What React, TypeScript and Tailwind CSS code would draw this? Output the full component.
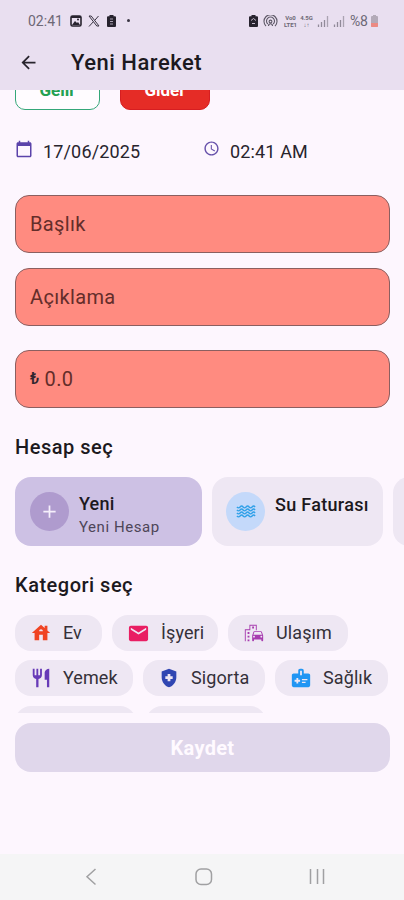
import type { ReactNode } from "react";
import {
  MdHouse,
  MdMail,
  MdEmojiTransportation,
  MdRestaurant,
  MdHealthAndSafety,
  MdMedicalInformation,
  MdCalendarToday,
  MdAccessTime,
  MdArrowBack,
  MdAdd,
} from "react-icons/md";

function StatusBar() {
  return (
    <div className="flex h-[41px] items-center pl-[28px] pr-[26px] text-[#6d6876]">
      <span className="w-[36px] whitespace-nowrap text-[14px] leading-none">02:41</span>
      <svg className="ml-[6px]" width="12" height="12" viewBox="0 0 12 12">
        <rect x="1" y="1" width="10" height="10" rx="1.5" fill="none" stroke="#27232e" strokeWidth="1.6" />
        <path d="M1 3h10V1H1zM2 10l3-4 2 2 1-1 2 3z" fill="#27232e" />
        <circle cx="8" cy="4.5" r="1" fill="#27232e" />
      </svg>
      <svg className="ml-[6px]" width="12" height="12" viewBox="0 0 12 12" fill="none" stroke="#3a3543">
        <path d="M1 1h2.2L11 11H8.800z" />
        <path d="M10.500 1 6.800 5.300M5.200 6.900 1 11.500" />
      </svg>
      <svg className="ml-[7px]" width="9" height="12" viewBox="0 0 9 12">
        <path d="M2.500 0h4v1.300H8a1 1 0 0 1 1 1V11a1 1 0 0 1-1 1H1a1 1 0 0 1-1-1V2.300a1 1 0 0 1 1-1h1.500z" fill="#27232e" />
        <path d="M3 4h3M3 6.500h3M3 9h3" stroke="#aaa2b2" />
      </svg>
      <span className="ml-[11px] size-[3px] rounded-full bg-[#3a3543]" />
      <svg className="ml-auto" width="9" height="12" viewBox="0 0 9 12">
        <path d="M2.500 0h4v1.300H8a1 1 0 0 1 1 1V11a1 1 0 0 1-1 1H1a1 1 0 0 1-1-1V2.300a1 1 0 0 1 1-1h1.500z" fill="#27232e" />
        <path d="M2 5.500 4.500 3.500 7 5.500M3 8.500h3" fill="none" stroke="#c5bccd" />
      </svg>
      <svg className="ml-[5px]" width="15" height="12" viewBox="0 0 15 12" fill="none" stroke="#5d5866" strokeWidth="1.100">
        <path d="M3 11a6.500 6.500 0 1 1 9 0M4.800 9a4 4 0 1 1 5.400 0" />
        <circle cx="7.500" cy="6.500" r="1.400" />
        <path d="M5.500 11c0-3 4-3 4 0" />
      </svg>
      <div className="ml-[5px] flex w-[15px] flex-col text-center text-[6px] font-bold leading-[7px]">
        <span>Vo0</span>
        <span className="whitespace-nowrap">LTE1</span>
      </div>
      <div className="ml-[2px] flex w-[13px] flex-col text-center text-[6px] font-bold leading-[7px]">
        <span>4.5G</span>
        <span>↓↑</span>
      </div>
      <Signal />
      <Signal />
      <span className="ml-[5px] w-[19px] whitespace-nowrap text-[14px] leading-none tracking-[-0.3px]">%8</span>
      <svg className="ml-[2px]" width="7" height="12" viewBox="0 0 7 12">
        <path d="M2 0h3v1h1a1 1 0 0 1 1 1v9a1 1 0 0 1-1 1H1a1 1 0 0 1-1-1V2a1 1 0 0 1 1-1h1z" fill="#b3aab8" />
        <path d="M0 8h7v3a1 1 0 0 1-1 1H1a1 1 0 0 1-1-1z" fill="#ec8a83" />
      </svg>
    </div>
  );
}

function Signal() {
  return (
    <svg className="ml-[4px]" width="12" height="12" viewBox="0 0 12 12" stroke="#918a99" strokeWidth="1.300">
      <path d="M1.500 9.500V12M4.500 7v5M7.500 5v7" />
      <path d="M10.500 1v11" stroke="#aaa3b1" />
    </svg>
  );
}

function Field({ children, className }: { children: ReactNode; className: string }) {
  return (
    <div
      className={`mr-[14px] ml-[15px] flex h-[58px] shrink-0 items-center rounded-[14px] border border-[#8b5f60] bg-[#ff8b80] px-[14px] text-[20px] tracking-[0.35px] text-[#642d2a] ${className}`}
    >
      {children}
    </div>
  );
}

function Chip({ icon, label, className }: { icon: ReactNode; label: string; className: string }) {
  return (
    <div className={`flex h-[36px] shrink-0 items-center rounded-[16px] bg-[#eee7f3] pl-[15px] ${className}`}>
      {icon}
      <span className="ml-[11px] whitespace-nowrap text-[18px] leading-none tracking-[0.1px] text-[#343039]">{label}</span>
    </div>
  );
}

function Waves() {
  return (
    <svg width="20" height="13" viewBox="0 0 22 14" fill="none" stroke="#2fa0e8" strokeWidth="1.500">
      <path d="M1 2q1.800 2 3.500 0t3.300 0 3.300 0 3.300 0 3.300 0 3.300 0M1 5.300q1.800 2 3.500 0t3.300 0 3.300 0 3.300 0 3.300 0 3.300 0M1 8.600q1.800 2 3.500 0t3.300 0 3.300 0 3.300 0 3.300 0 3.300 0M1 11.900q1.800 2 3.500 0t3.300 0 3.300 0 3.300 0 3.300 0 3.300 0" />
    </svg>
  );
}

export default function App() {
  return (
    <div className="flex h-[900px] w-[404px] flex-col overflow-hidden bg-[#fdf6fe] font-[Roboto,sans-serif]">
      <header className="z-10 h-[90px] shrink-0 bg-[#e9dff0]">
        <StatusBar />
        <div className="flex h-[42px] items-center pl-[18px]">
          <MdArrowBack size={21} color="#28242d" />
          <h1 className="ml-[32px] text-[22px] font-medium tracking-[0.5px] text-[#1c1920]">Yeni Hareket</h1>
        </div>
      </header>

      <main className="flex h-[623px] shrink-0 flex-col overflow-hidden">
        <div className="-mt-[20px] flex h-[40px] shrink-0 gap-[20px] pl-[15px] text-[17px] font-bold">
          <div className="flex w-[85px] items-center justify-center rounded-[10px] border border-[#35a779] bg-[#fffcff] pt-[2px] text-[#24a052]">Gelir</div>
          <div className="flex w-[90px] items-center justify-center rounded-[10px] border border-[#d61e21] bg-[#e52c26] pt-[2px] text-white">Gider</div>
        </div>

        <div className="mt-[30px] flex h-[24px] shrink-0 pl-[15px] text-[18px] leading-[24px] text-[#28242d]">
          <MdCalendarToday size={18} color="#5b43aa" />
          <span className="ml-[10px] w-[160px] tracking-[0.15px]">17/06/2025</span>
          <MdAccessTime size={17} color="#6650aa" />
          <span className="ml-[10px] tracking-[0.15px]">02:41 AM</span>
        </div>

        <Field className="mt-[31px]">Başlık</Field>
        <Field className="mt-[15px]">Açıklama</Field>
        <Field className="mt-[24px]">
          <span className="text-[16px] font-medium text-[#30262f]">₺</span>
          <span className="ml-[5px]">0.0</span>
        </Field>

        <h2 className="mt-[25px] shrink-0 pl-[15px] text-[20px] font-medium leading-[28px] tracking-[0.5px] text-[#1c1920]">Hesap seç</h2>
        <div className="mt-[16px] flex h-[69px] shrink-0 gap-[10px] overflow-hidden pl-[15px]">
          <div className="flex w-[187px] shrink-0 items-center rounded-[16px] bg-[#cdc1e4] pl-[15px]">
            <div className="flex size-[39px] items-center justify-center rounded-full bg-[#af9bce]">
              <MdAdd size={21} color="#f5effb" />
            </div>
            <div className="ml-[10px] flex flex-col pt-[7px]">
              <span className="text-[18px] font-medium leading-[24px] tracking-[0.2px] text-[#1c1920]">Yeni</span>
              <span className="text-[15px] leading-[22px] tracking-[0.55px] text-[#4d4658]">Yeni Hesap</span>
            </div>
          </div>
          <div className="flex w-[171px] shrink-0 rounded-[16px] bg-[#eee7f3] pl-[14px] pt-[15px]">
            <div className="flex size-[39px] items-center justify-center rounded-full bg-[#c4d9fa]">
              <Waves />
            </div>
            <span className="ml-[10px] whitespace-nowrap text-[18px] font-medium leading-[25px] tracking-[0.3px] text-[#1c1920]">Su Faturası</span>
          </div>
          <div className="w-[171px] shrink-0 rounded-[16px] bg-[#eee7f3]" />
        </div>

        <h2 className="mt-[25px] shrink-0 pl-[15px] text-[20px] font-medium leading-[28px] tracking-[0.5px] text-[#1c1920]">Kategori seç</h2>
        <div className="mt-[16px] flex shrink-0 gap-[10px] pl-[15px]">
          <Chip className="w-[87px]" icon={<MdHouse size={22} color="#f04423" />} label="Ev" />
          <Chip className="w-[106px]" icon={<MdMail size={23} color="#e91e63" />} label="İşyeri" />
          <Chip className="w-[120px]" icon={<MdEmojiTransportation size={22} color="#a73caf" />} label="Ulaşım" />
        </div>
        <div className="mt-[9px] flex shrink-0 gap-[10px] pl-[15px]">
          <Chip className="w-[118px]" icon={<MdRestaurant size={22} color="#673ab7" />} label="Yemek" />
          <Chip className="w-[122px]" icon={<MdHealthAndSafety size={22} color="#3046b2" />} label="Sigorta" />
          <Chip className="w-[113px]" icon={<MdMedicalInformation size={22} color="#2196f3" />} label="Sağlık" />
        </div>
        <div className="mt-[10px] flex shrink-0 gap-[10px] pl-[15px]">
          <div className="h-[36px] w-[121px] rounded-[16px] bg-[#eee7f3]" />
          <div className="h-[36px] w-[120px] rounded-[16px] bg-[#eee7f3]" />
        </div>
      </main>

      <button className="mr-[14px] ml-[15px] mt-[10px] h-[49px] shrink-0 rounded-[16px] bg-[#e0d7eb] text-[20px] font-bold tracking-[0.3px] text-[#fffaff]">Kaydet</button>

      <nav className="mt-auto flex h-[46px] shrink-0 items-center bg-[#f5f5f6]">
        <svg width="404" height="46" viewBox="0 0 404 46" fill="none" stroke="#a0a0a2" strokeWidth="1.500">
          <path d="m95.500 15-8.500 7.800 8.500 7.700" />
          <rect x="196" y="15" width="15.500" height="15.500" rx="5" />
          <path d="M310.500 15v15M317.500 15v15M323.500 15v15" />
        </svg>
      </nav>
    </div>
  );
}
